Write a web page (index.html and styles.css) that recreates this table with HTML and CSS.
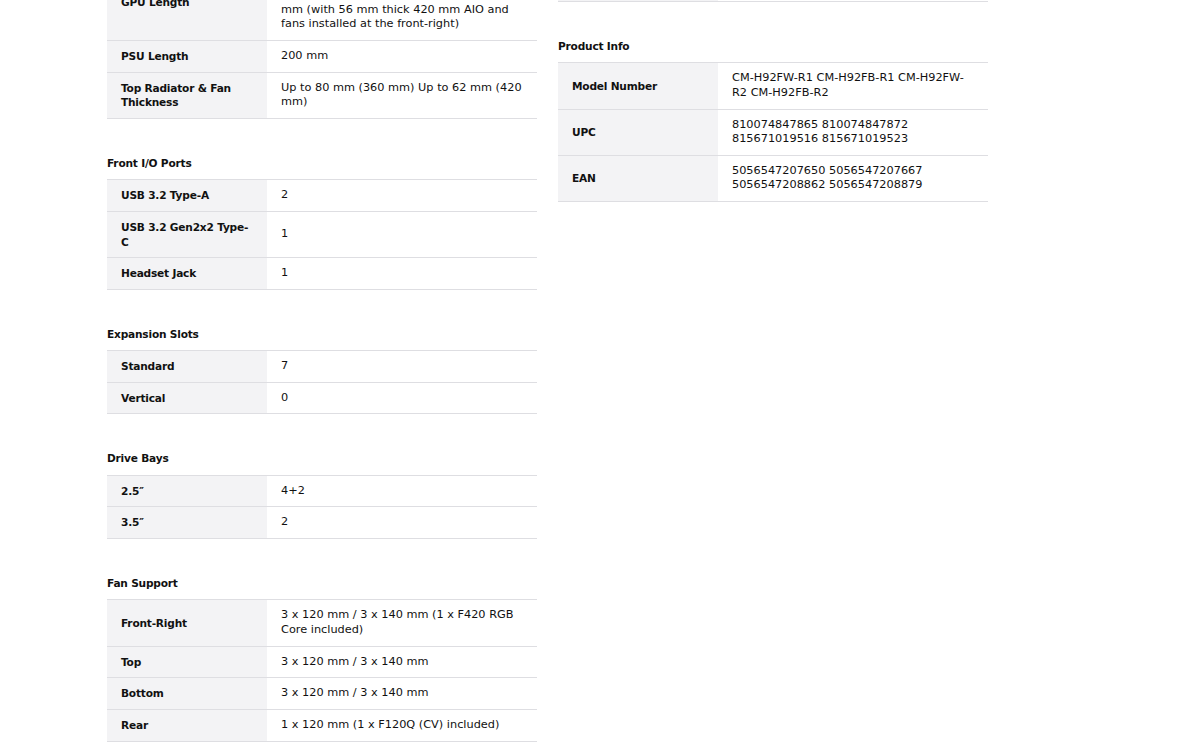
FILE: index.html
```html
<!DOCTYPE html>
<html lang="en">
<head>
    <meta charset="UTF-8">
    <meta name="viewport" content="width=device-width, initial-scale=1.0">
    <title>Specifications</title>
    <link rel="stylesheet" href="styles.css">
</head>
<body>

    <div class="specs">
        <div class="specs-col">
            <div class="spec-group">
                <table class="spec-table">
                    <tr>
                        <th>GPU Length</th>
                        <td>Up to 415 mm (without front fans) Up to 380<br>mm (with 56 mm thick 420 mm AIO and fans installed at the front-right)</td>
                    </tr>
                    <tr>
                        <th>PSU Length</th>
                        <td>200 mm</td>
                    </tr>
                    <tr>
                        <th>Top Radiator &amp; Fan Thickness</th>
                        <td>Up to 80 mm (360 mm) Up to 62 mm (420 mm)</td>
                    </tr>
                </table>
            </div>

            <div class="spec-group">
                <h3>Front I/O Ports</h3>
                <table class="spec-table">
                    <tr>
                        <th>USB 3.2 Type-A</th>
                        <td>2</td>
                    </tr>
                    <tr>
                        <th>USB 3.2 Gen2x2 Type-C</th>
                        <td>1</td>
                    </tr>
                    <tr>
                        <th>Headset Jack</th>
                        <td>1</td>
                    </tr>
                </table>
            </div>

            <div class="spec-group">
                <h3>Expansion Slots</h3>
                <table class="spec-table">
                    <tr>
                        <th>Standard</th>
                        <td>7</td>
                    </tr>
                    <tr>
                        <th>Vertical</th>
                        <td>0</td>
                    </tr>
                </table>
            </div>

            <div class="spec-group">
                <h3>Drive Bays</h3>
                <table class="spec-table">
                    <tr>
                        <th>2.5″</th>
                        <td>4+2</td>
                    </tr>
                    <tr>
                        <th>3.5″</th>
                        <td>2</td>
                    </tr>
                </table>
            </div>

            <div class="spec-group">
                <h3>Fan Support</h3>
                <table class="spec-table">
                    <tr>
                        <th>Front-Right</th>
                        <td>3 x 120 mm / 3 x 140 mm (1 x F420 RGB Core included)</td>
                    </tr>
                    <tr>
                        <th>Top</th>
                        <td>3 x 120 mm / 3 x 140 mm</td>
                    </tr>
                    <tr>
                        <th>Bottom</th>
                        <td>3 x 120 mm / 3 x 140 mm</td>
                    </tr>
                    <tr>
                        <th>Rear</th>
                        <td>1 x 120 mm (1 x F120Q (CV) included)</td>
                    </tr>
                </table>
            </div>
        </div>

        <div class="specs-col">
            <div class="spec-group">
                <table class="spec-table">
                    <tr class="spacer-row">
                        <th></th>
                        <td></td>
                    </tr>
                </table>
            </div>

            <div class="spec-group">
                <h3>Product Info</h3>
                <table class="spec-table">
                    <tr>
                        <th>Model Number</th>
                        <td>CM-H92FW-R1 CM-H92FB-R1 CM-H92FW-R2 CM-H92FB-R2</td>
                    </tr>
                    <tr>
                        <th>UPC</th>
                        <td>810074847865 810074847872 815671019516 815671019523</td>
                    </tr>
                    <tr>
                        <th>EAN</th>
                        <td>5056547207650 5056547207667 5056547208862 5056547208879</td>
                    </tr>
                </table>
            </div>
        </div>
    </div>

</body>
</html>
```

FILE: styles.css
```css
body {
    margin: 0;
    font-family: "DejaVu Sans", "Open Sans", sans-serif;
    font-size: 11.3px;
    line-height: 14px;
    color: #111;
    background-color: #fff;
}

/* la pagina esta desplazada: el primer bloque empieza por encima */
.specs {
    display: grid;
    grid-template-columns: 430px 430px;
    column-gap: 21px;
    padding-left: 107px;
    margin-top: -34.5px;
    align-items: start;
}

.spec-group + .spec-group {
    margin-top: 36.75px;
}

.spec-group h3 {
    margin: 0 0 9.5px;
    font-size: 10.6px;
    line-height: 14px;
    font-weight: bold;
    letter-spacing: -0.2px;
}

.spec-table {
    width: 100%;
    border-collapse: collapse;
    table-layout: fixed;
}

.spec-table tr {
    border-top: 1px solid #dedee2;
    border-bottom: 1px solid #dedee2;
}

.spec-table th,
.spec-table td {
    padding: 8.05px 14px;
    line-height: 14.6px;
    vertical-align: middle;
    text-align: left;
}

.spec-table th {
    width: 134px;
    padding-right: 12px;
    background-color: #f3f3f5;
    font-size: 10.6px;
    font-weight: bold;
    letter-spacing: -0.2px;
}

.spacer-row th,
.spacer-row td {
    height: 19.4px;
}

.spec-group:first-child .spec-table tr:first-child {
    border-top: none;
}
```
